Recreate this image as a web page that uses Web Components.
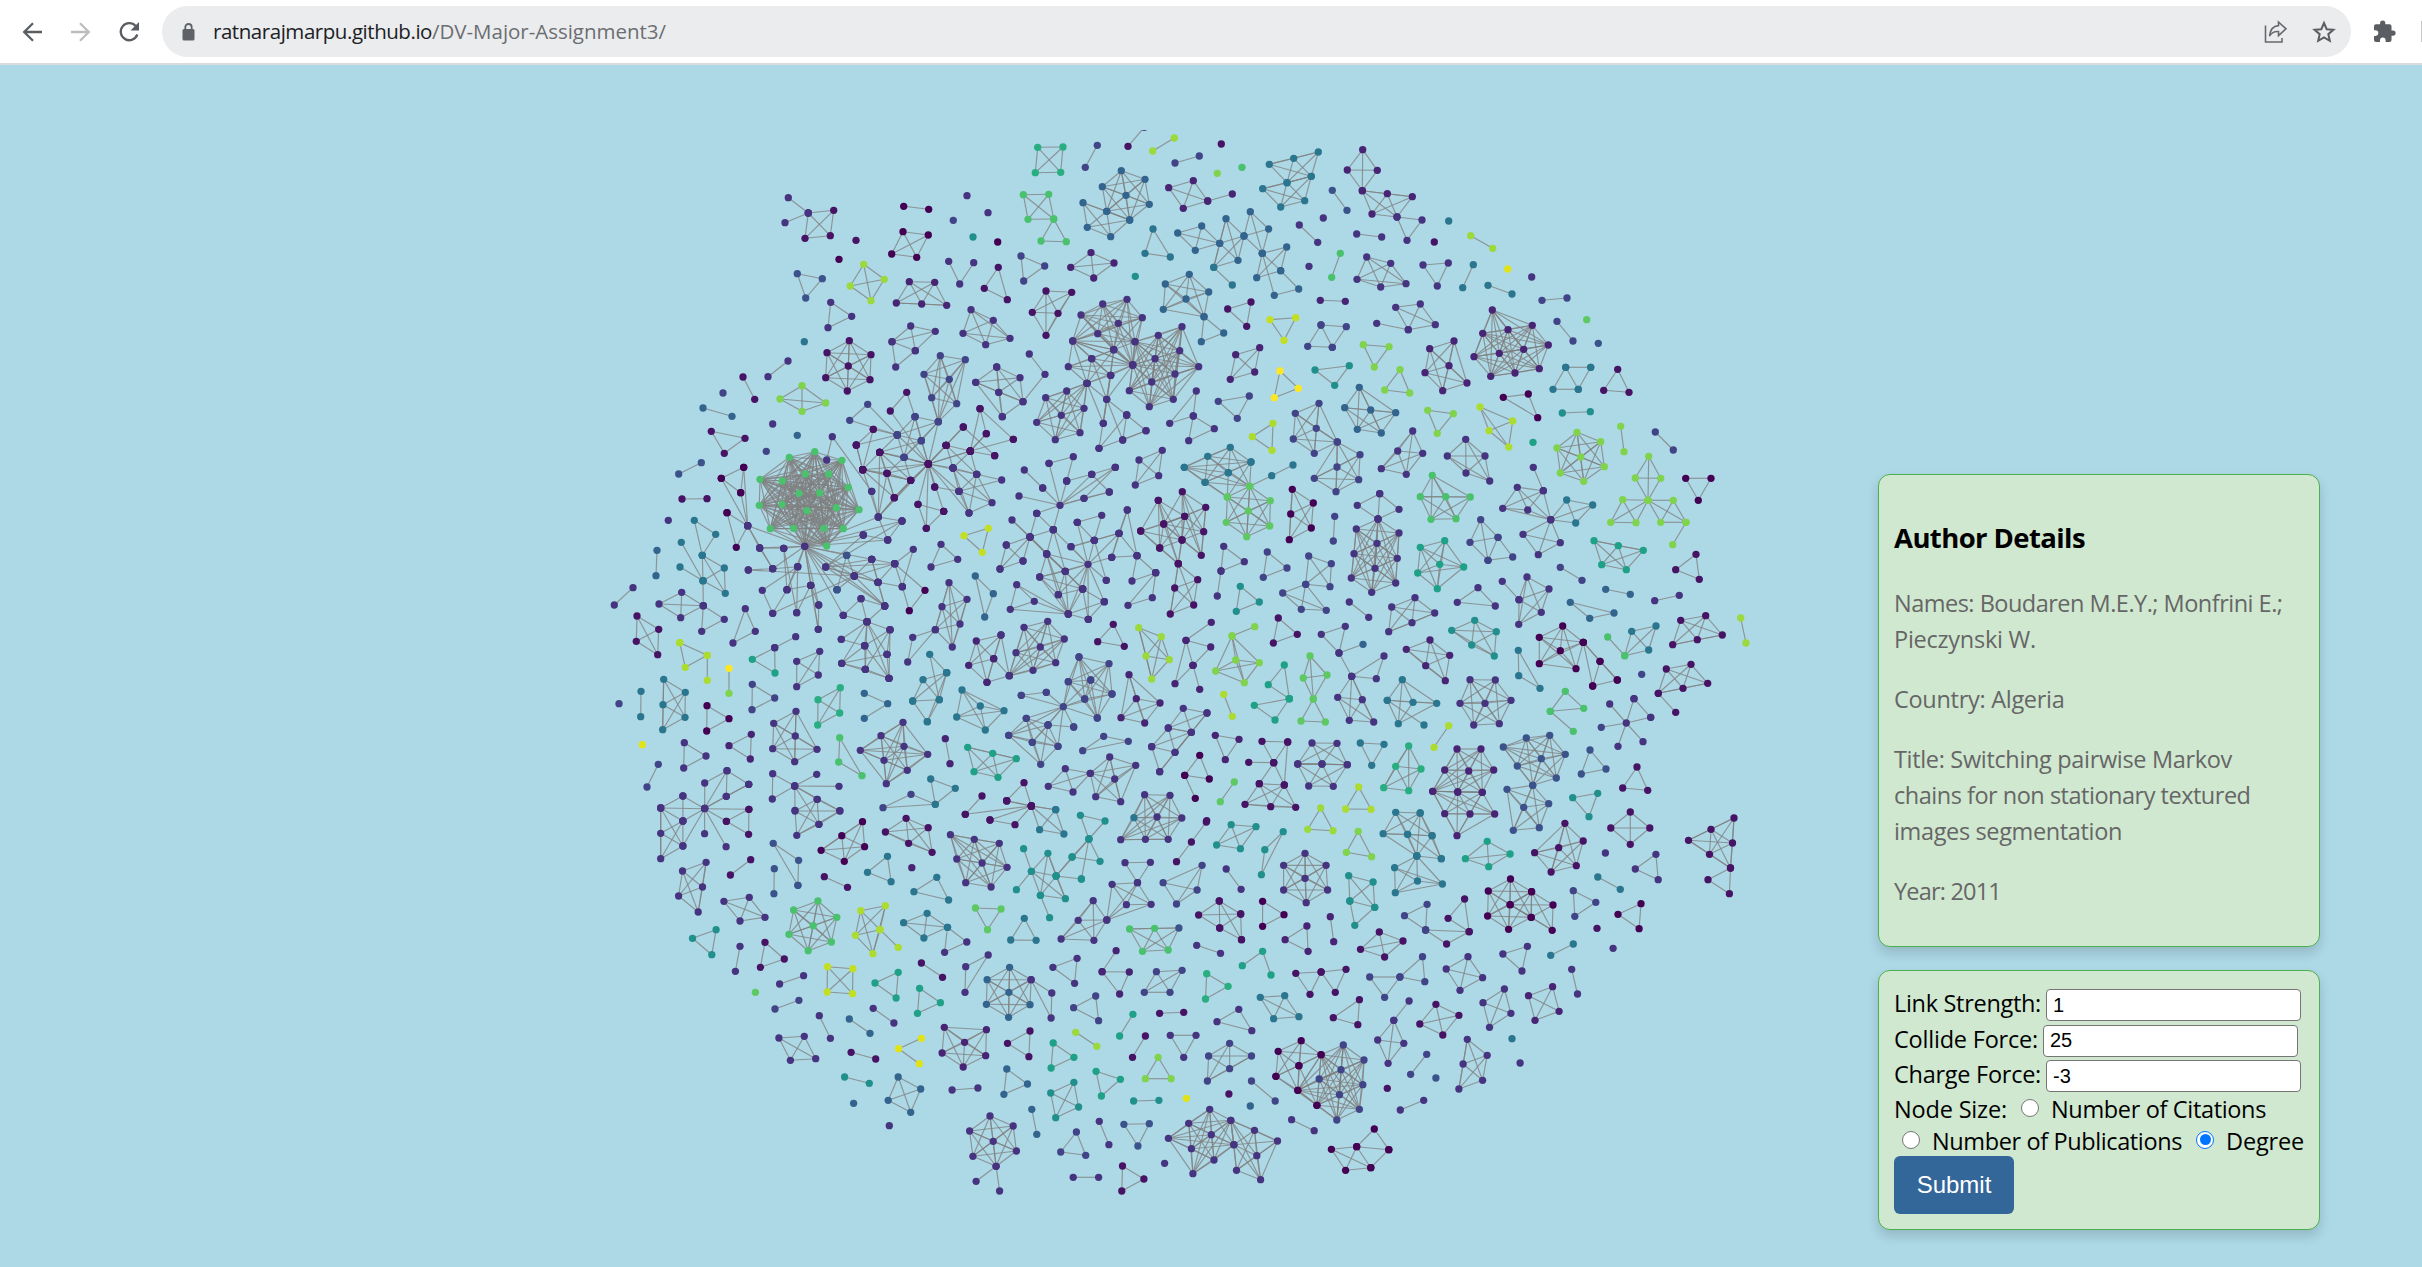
<!DOCTYPE html>
<html lang="en">
<head>
<meta charset="utf-8">
<title>Author Network</title>
<style>
html,body{margin:0;height:100%;overflow:hidden}
body{background:#add8e6;font-family:"Open Sans","Noto Sans",sans-serif;color:#000}
</style>
</head>
<body>
<network-page></network-page>
<script>
const attach = (el, html) => { const r = el.attachShadow({mode:'open'}); r.innerHTML = html; return r; };

/* A line of text whose tracking is tuned to a given width */
class FitText extends HTMLElement {
  connectedCallback(){
    attach(this, `<style>:host{display:block;white-space:nowrap}span{display:inline-block}</style><span><slot></slot></span>`);
    const w = +this.getAttribute('w'), s = this.shadowRoot.querySelector('span');
    const n = this.textContent.length, nat = s.getBoundingClientRect().width;
    if (w && nat) s.style.letterSpacing = ((w - nat) / n) + 'px';
  }
}
customElements.define('fit-text', FitText);

class BrowserBar extends HTMLElement {
  connectedCallback(){
    attach(this, `<style>
:host{display:flex;box-sizing:border-box;height:65px;background:#fff;border-bottom:2px solid #d9dcde;padding:6px 0 6px 22px;align-items:center;overflow:hidden;flex:none}
svg{display:block;flex:none}
.nav{display:flex;gap:26px;width:140px;flex:none}
.omni{display:flex;align-items:center;box-sizing:border-box;width:2189px;height:51px;border-radius:26px;background:#ebecee;padding:0 15px 0 20px;flex:none}
.url{display:flex;font-size:20.5px;line-height:51px;margin-left:18px;color:#202124;flex:1}
.path{color:#6b6e72}
.acts{display:flex;gap:24px}
.puz{margin-left:22px}
.sep{width:2px;height:21px;background:#c8c8c8;margin-left:25px;flex:none}
</style>
<div class="nav">
<svg width="22" height="22" viewBox="0 0 22 22" fill="none" stroke="#5a5d61" stroke-width="2.3"><path d="M20 11H2.6M11 2.2L2.2 11l8.8 8.8"/></svg>
<svg width="22" height="22" viewBox="0 0 22 22" fill="none" stroke="#bcbdbf" stroke-width="2.3"><path d="M1 11h17.6M10 2.2l8.800 8.800-8.800 8.800"/></svg>
<svg width="22" height="22" viewBox="0 0 22 22" fill="none" stroke="#5a5d61" stroke-width="2.300"><path d="M17.600 5A8.500 8.500 0 1 0 19.300 13.500"/><path d="M21 1v8.500h-8.500z" fill="#5a5d61" stroke="none"/></svg>
</div>
<div class="omni">
<svg width="13" height="18" viewBox="0 0 13 18"><rect x=".5" y="6" width="12" height="11.500" rx="1.500" fill="#5f6368"/><path d="M3.300 7V4.200a3.200 3.200 0 0 1 6.400 0V7" fill="none" stroke="#5f6368" stroke-width="1.800"/></svg>
<div class="url"><fit-text w="219">ratnarajmarpu.github.io</fit-text><fit-text class="path" w="234">/DV-Major-Assignment3/</fit-text></div>
<div class="acts">
<svg width="24" height="24" viewBox="0 0 24 24" fill="none" stroke="#66696d" stroke-width="1.600"><path d="M1.500 5.500V22h16.500v-4"/><path d="M14.500 2l7.500 6.800-7.500 6.800v-4C10.500 11.300 7.500 12.800 5.500 16c.6-6 3.800-10 9-10.400z"/></svg>
<svg width="24" height="24" viewBox="0 0 24 24" fill="none" stroke="#5a5d61" stroke-width="2"><path d="M12 3l2.700 6.200 6.700.6-5.100 4.400 1.500 6.600L12 17.300l-5.800 3.500 1.500-6.600-5.100-4.400 6.700-.6z"/></svg>
</div></div>
<svg class="puz" width="23" height="23" viewBox="0 0 23 23"><path fill="#5a5d61" d="M20 10.500h-1.500V6.300a2 2 0 0 0-2-2h-4.200V3a2.600 2.600 0 0 0-5.200 0v1.300H3a2 2 0 0 0-2 2v4h1.500a2.800 2.800 0 0 1 0 5.600H1v4a2 2 0 0 0 2 2h4v-1.500a2.800 2.800 0 0 1 5.600 0v1.500h3.900a2 2 0 0 0 2-2v-4.200H20a2.600 2.600 0 0 0 0-5.200z"/></svg>
<div class="sep"></div>`);
  }
}
customElements.define('browser-bar', BrowserBar);

class PanelCard extends HTMLElement {
  connectedCallback(){
    attach(this, `<style>:host{display:block;box-sizing:border-box;width:442px;background:#d0e8d0;border:1px solid #4caf50;border-radius:12px;padding:15px;box-shadow:0 6px 12px rgba(0,0,0,.15)}</style><slot></slot>`);
  }
}
customElements.define('panel-card', PanelCard);

class AuthorDetails extends HTMLElement {
  connectedCallback(){
    attach(this, `<style>
:host{display:block}
panel-card{height:473px}
h3{font-size:27.500px;line-height:38px;margin:29px 0 27.500px}
p{font-size:23.500px;line-height:36px;color:#666;margin:0 0 24px}
</style><panel-card>
<h3><fit-text w="191">Author Details</fit-text></h3>
<p><fit-text w="388.5">Names: Boudaren M.E.Y.; Monfrini E.;</fit-text><fit-text w="142">Pieczynski W.</fit-text></p>
<p><fit-text w="170.5">Country: Algeria</fit-text></p>
<p><fit-text w="338">Title: Switching pairwise Markov</fit-text><fit-text w="356.5">chains for non stationary textured</fit-text><fit-text w="228">images segmentation</fit-text></p>
<p><fit-text w="107">Year: 2011</fit-text></p>
</panel-card>`);
  }
}
customElements.define('author-details', AuthorDetails);

class ForceForm extends HTMLElement {
  connectedCallback(){
    attach(this, `<style>
:host{display:block}
panel-card{height:260px;font-size:23.500px}
.row{display:flex;height:35.500px;line-height:35.500px;align-items:flex-start}
.lab{flex:none}
input[type=text]{box-sizing:border-box;width:255px;height:32px;margin:3px 0 0 5px;border:1px solid #767676;border-radius:4px;padding:0 6px;font:20px "Liberation Sans",Arial,sans-serif;color:#000;background:#fff;outline:0}
.r{box-sizing:border-box;width:18px;height:18px;border:1.500px solid #767676;border-radius:50%;background:#fff;margin:6px 0 0;flex:none}
.r.on{border:1.500px solid #0075ff;display:grid;place-items:center}
.r.on::after{content:"";width:11px;height:11px;border-radius:50%;background:#0075ff}
.row.s{height:32px;line-height:32px}
button{display:block;width:120px;height:58px;border:0;border-radius:6px;background:#369;color:#fff;font:24px "Liberation Sans",Arial,sans-serif;padding:0;margin:-1px 0 0}
</style><panel-card>
<div class="row"><fit-text class="lab" w="147">Link Strength:</fit-text><input type="text" value="1"></div>
<div class="row"><fit-text class="lab" w="144">Collide Force:</fit-text><input type="text" value="25"></div>
<div class="row"><fit-text class="lab" w="147">Charge Force:</fit-text><input type="text" value="-3"></div>
<div class="row s"><fit-text w="113">Node Size:</fit-text><span class="r" style="margin-left:14px"></span><fit-text w="215" style="margin-left:12px">Number of Citations</fit-text></div>
<div class="row s"><span class="r" style="margin-left:8px"></span><fit-text w="250" style="margin-left:12px">Number of Publications</fit-text><span class="r on" style="margin-left:14px"></span><fit-text w="78" style="margin-left:12px">Degree</fit-text></div>
<button>Submit</button>
</panel-card>`);
  }
}
customElements.define('force-form', ForceForm);

/* Viridis ramp, one letter per step */
const RAMP = {a:'#440154',b:'#471365',c:'#482475',d:'#463480',e:'#414487',f:'#3b528b',g:'#32648e',h:'#2a768e',i:'#21908c',j:'#1fa187',k:'#28ae80',l:'#4ac16d',m:'#5ec962',n:'#80d34d',o:'#9bd93c',p:'#addc30',q:'#c2df23',r:'#dfe318',s:'#fde725'};

/* Tiles of the graph: origin, scale, then one group per line.
   A plain line is a fully linked group; a leading "-" is a path; "*" is a hub and its spokes. */
const TILES = [
[600,120,3,3,`
-d 565,233 625,279
-d 555,308 625,279
d 625,279 b 701,271 691,347 615,355
a 911,259 986,268
a 909,335 985,345 950,412 875,402
d 1101,227
d 1164,278
e 1060,301
i 1119,351
a 1193,366
b 768,361
a 717,418
f 592,461 667,476 617,534
o 791,433 853,478 813,542 751,498
-d 1046,424 1079,492 1121,428
c 928,485 1004,487 1040,556 965,552 889,549
b 1195,442 1153,505 1222,539
d 692,547 755,589 684,623
d 1113,569 1180,601 1230,655 1157,674 1089,640
h 613,665
d 932,618 1006,634 946,692 876,665
-d 946,692 887,741 876,665
b 748,662 813,704 810,779 742,813 677,773 681,698 745,738
d 564,723 504,770
b 429,771 464,838
e 369,819
g 309,864 396,889
n 606,797 677,849 606,874 540,837
d 518,912
b 334,934 435,955 373,1000
g 592,946
e 499,994
e 1021,707 1096,719 1048,778 972,763 1070,851 995,833 1015,905
-b 985,1032 871,873 920,817 e 945,890
e 803,853 749,901 892,945
-b 788,1049 769,975 820,928 e 892,945 b 769,975
-b 820,928 788,1049
e 945,890 1015,905 892,945 964,962 912,1012
*b 985,1032 e 892,945 964,962 1015,905 945,890 912,1012 b 1038,976 839,997 1111,993 1090,921
-b 839,997 e 892,945
-b 839,997 e 964,962
d 1190,741 1127,787 1196,817 1260,773 1269,845
-d 1127,787 1207,890 1196,817
-d 1190,741 1207,890 1269,845 1335,763 1288,702
-b 1240,958 1140,866 1159,941 1111,993 1140,866
-b 1111,993 1240,958
-b 1038,976 1090,921 1184,1007
-b 1038,976 1111,993 1159,941
-d 680,1020 697,950 815,1114
`],
[600,440,3,3,`
f 304,68 236,102
b 246,177 321,176
d 205,241
a 431,82 364,115 422,158
*d 443,257 a 431,82 364,115 422,158
-a 381,218 409,322 d 443,257 a 381,218
d 614,319 l 644,35 568,52 726,61 480,118 547,123 616,102 686,102 745,142 597,160 659,159 478,196 546,193 709,203 777,209 621,212 511,266 580,265 671,265 730,266 680,318
*d 614,319 443,257 479,324 551,325 593,380 677,381 632,436 518,386 f 740,346 d 763,408 815,358 834,427 854,498 f 711,449 d 730,526 656,495 655,568 790,285 863,300 835,231 906,243 561,449
-d 443,257 479,324 518,386 443,257
-d 445,390 518,386 593,380 487,451 518,520 561,449 551,325 479,324
-d 445,390 763,408 518,520
-d 551,325 590,518 593,380 561,449 632,436 590,518
-d 632,436 655,568 656,495 632,436
*d 677,381 815,358 884,371 763,408 834,427 854,498 790,285 906,243
*d 763,408 f 740,346 711,449 d 884,371 854,498 834,427
-f 740,346 711,449
-d 763,408 815,358 884,371 834,427 815,358
-d 834,427 907,440 884,371 940,328 907,440
-d 884,371 a 975,451 928,512 d 907,440
-d 834,427 854,498 815,358
-d 790,285 863,300 906,243 835,231 863,300
b 788,89 839,37 932,121 883,173 985,72
*b 861,100 788,89 839,37 883,173 985,72 932,121
*d 835,231 b 788,89 861,100 932,121 883,173 985,72 839,37 d 815,154
-b 788,89 769,16
-b 839,37 e 912,52 b 932,121 788,89
-e 912,52 b 861,100
*b 985,72 d 1059,84 b 1111,34 d 1130,103 1077,154 b 1004,141 954,193 979,265 1039,16 1031,214
-b 1031,214 954,193 979,265 1031,214
d 1059,84 1130,103 1077,154 1107,219 1176,188
-d 1059,84 b 1039,16 d 1130,103 b 1111,34 1184,47
-d 1077,154 1205,120 1130,103
-b 1111,34 d 1059,84
-b 1004,141 d 1077,154
-d 1107,219 b 985,72
q 1165,265 1092,287 1147,337
d 1023,313 1073,358 993,381
g 1126,408 1180,461 1154,531
-h 307,346 283,241 347,283 307,346
-h 244,307 309,422 240,381
h 307,346 309,422 373,384 376,460
-h 309,422 d 310,497
g 171,331 168,407
d 99,443 43,495
d 245,457 177,492 242,533 310,497
d 310,497 373,538 305,574
b 111,528 176,568 173,644 109,604
d 436,506 466,574 399,609
-d 587,590 524,623 j 457,658 525,699 d 524,623
-p 239,608 322,646 256,682 239,608
p 322,646 322,721
s 387,685 n 387,760
d 590,664 659,634 655,705 590,740
e 457,733 524,774 456,809
h 123,754 122,830
e 57,791
h 191,718 256,757 255,832 188,869 189,794
a 321,797 387,836 320,873
k 721,743 654,779 719,819 653,855
-g 793,760 863,791 793,835
r 127,914
d 253,908 318,948 251,984
c 454,883 387,917 451,957
e 175,973 141,1041
d 588,814 521,850 586,888 518,926 651,928 584,965
l 719,893 716,966 786,1007
d 909,847 843,887 912,919 781,931 983,943 852,961 922,991 859,1031
c 1036,896 1050,971
h 1086,750 1141,798 1212,812 1156,870 1070,831
h 1040,698 969,719 938,783 1018,779
-h 1040,698 989,643 1018,779 982,845 938,783
-h 982,845 1040,698
d 1047,428 1101,478 1026,500 1080,552 1006,569 1057,621
d 1006,569 938,592 923,666
c 1129,603 1181,656 1161,727 1106,676 1203,585
-c 1181,656 1228,707 1161,727
-d 730,526 783,476 801,545 730,526
-d 783,476 854,498 801,545
-d 724,598 801,545 870,569 794,617 724,598
*d 801,545 794,617 861,643 796,688 867,715
-d 870,569 867,715 796,688 870,569 861,643 867,715 725,670 861,643
-d 796,688 725,670 794,617 867,715
-d 725,670 801,545
-d 794,617 796,688
-d 446,1033 381,992 314,1029 314,1105 379,1069 381,992 314,1105
-d 446,1033 379,1069
-d 446,1033 314,1105
d 518,1001 517,1077 584,1038
*d 584,1038 650,1003 717,1039 652,1078 585,1111 719,1112
e 933,1063 849,1103 h 1006,1093
h 992,1017 1066,1045 1006,1093
j 1103,922 1178,940 1122,995 1194,1012 1249,956
b 1146,1068 1096,1123
-b 1220,1082 1272,1028 1294,1098 h 1367,1109
-b 1096,1123 1294,1098
-b 1220,1082 1294,1098
`],
[1000,440,3,3,`
*d 180,196 128,144 57,168 200,123 275,103 252,175 147,70 110,220 160,269 346,82 328,156
-d 73,90 128,144
-d 147,70 220,50 200,123
-d 346,82 275,103 328,156 252,175 346,82
-d 200,123 275,103
-d 140,342 36,240 90,291 19,315 69,363 90,291 0,387 69,363
-d 0,387 19,315
-d 90,291 140,342 160,269 90,291
-d 110,220 160,269 196,394
-d 110,220 90,291 196,394
d 140,342 196,394 175,464 119,411 205,522 248,447
*d 264,373 140,342 196,394 283,301 213,320 335,352 319,421 248,447 265,538 205,522 119,411 357,280 232,247 175,464 313,485 160,269
-d 232,247 305,226 283,301 232,247
-d 319,421 283,301 213,320 357,280 283,301
-d 357,280 335,352 382,210 357,280 411,347 335,352
-d 382,210 411,347 396,423 467,398 411,347
-d 467,398 457,473 384,496 467,398
-d 248,447 313,485 265,538 205,522 313,485
-d 248,447 265,538
d 205,522 50,434 103,484 31,508
d 487,31 417,60 476,107 406,135
h 691,22 623,49 753,66 553,82 685,98 615,127 m 749,139
*m 682,171 h 615,127 553,82 753,66 685,98
-m 749,139 h 815,107 879,75
m 682,171 749,139 811,182 745,213 679,247 809,258 740,290
b 475,181 491,252 422,273 479,324 535,371 554,229
b 547,155 554,229 617,202 611,275 604,346 546,300 491,252
b 535,371 593,419 524,444 581,495 511,522
*b 546,300 535,371 422,273 479,324 475,181
a 877,148 940,189 872,222 934,264 868,299
e 1004,229 1000,303
e 1012,6 1080,44 1011,81 943,115 1076,119 1008,155
d 1139,161 1072,196 1134,237
-d 1139,161 1197,208 1134,237
d 1134,237 1069,267 1131,310 1197,279 1062,341 1192,355 1125,385 1054,414 1187,429 1115,457
d 671,319 733,365 663,393
d 663,393 652,468
e 802,336 861,384 790,412
i 721,439 778,486 709,514
e 926,348 994,371 990,440 917,433
e 917,433 904,508 979,511 848,459
d 1048,486 1106,532
b 835,534 892,583 820,609
d 1036,559 964,583 1017,639
-g 1089,613 d 1017,639 1055,709
d 1055,709 1152,648 1129,716
d 1055,709 1013,772 1087,779 1048,841 1121,846
d 1175,501 1166,575 1245,473 1304,519 1236,548
b 340,553 293,605 373,619
d 143,544 72,562 193,597 121,621 48,638 167,668 99,691 28,707
-d 3,585 28,707
o 416,563 484,590 438,648 508,659 455,717
-c 634,547 558,601 632,621 579,676 599,748
-c 579,676 525,731 558,601 579,676
-n 764,560 696,588
n 696,588 707,660 778,668 647,693 733,728
p 671,763 697,829
-j 868,776 853,675 805,734 868,776
j 868,776 763,796 825,840
m 930,648 910,714 981,705 940,777
m 940,777 903,843 976,846
e 237,651 327,671 205,725 272,720 254,777 336,762 292,834
*e 190,800 237,651 272,720 254,777 292,834 205,725 336,762 139,757 64,766 221,861 79,835 144,855 26,886 97,907 174,919
-e 64,766 139,757
-e 144,855 221,861
e 79,835 144,855 26,886 97,907 174,919 122,973
c 387,704 409,776 480,789 363,833 434,849
e 311,889 248,932 385,904
d 550,805 621,819 505,864 574,877
d 505,864 574,877 525,937 455,920
-d 455,920 479,995 525,937 621,819
-d 479,995 574,877
c 646,886 717,898 676,959
-b 746,967 821,968 786,904 863,906 821,968 778,1031
-b 863,906 853,1035 821,968
b 778,1031 853,1035 735,1093 812,1100 887,1102
d 936,909 1011,910 1042,974 893,972 966,972
d 893,972 966,972 1042,974 926,1038 1000,1039
h 1081,909 1152,913 1115,976
k 1226,918 1187,979 1151,1043 1263,987 1226,1052
d 196,986 145,1039 219,1056 271,1000
d 271,1000 329,951 407,976 344,1017 287,1070 362,1085
-a 554,1006 599,946 628,1017 554,1006 586,1075
m 703,1026 661,1085
p 1076,1041 1037,1107 1113,1108
b 620,1142
`],
[1400,460,3,3,`
l 97,46 61,110 137,110 211,111 93,178 168,176
-d 400,22 430,92
d 352,82 430,92 308,145 383,150 452,179
d 452,179 h 500,120 578,135 527,189
d 452,179 481,248 369,223 415,284
e 242,179 294,232 210,247 264,301
-e 294,232 338,291 264,301
j 134,242 61,262 119,313 191,321 53,339 112,386
e 481,322 546,361
g 617,388 691,403
d 764,422 838,406
n 746,-11 706,54 782,55 744,121
n 744,121 668,119 632,187 708,188
n 744,121 820,121 782,187 858,187
n 858,187 818,254
a 857,55 933,55 895,121
b 888,283 827,329 898,358
j 582,242 655,257 730,271 605,314 679,329
d 234,383 172,427 286,438
d 307,364 357,419
d 381,351 447,387 357,419 424,457 356,493
g 511,427 569,475 642,459
i 224,481 155,511 289,515 215,555 283,588
c 90,540 19,568 149,586 77,617 136,662
b 917,467 842,481 967,525 892,539 818,554
o 1022,474 1038,549
h 768,498 695,514 746,570 l 674,587
l 623,531 674,587
a 488,498 418,532 481,572 418,611 528,626 550,547
-a 600,604 550,547 578,678 652,660 600,604 578,678
-a 550,547 652,660
e 725,643
h 355,571 356,647 420,685
b 873,613 799,627 923,670 849,685 775,700
b 775,700 827,757
h 7,659 39,727 110,730 -38,721 -5,791
-h -38,721 72,795
d 210,659 286,660 333,721 255,730 180,730 221,795 298,791
l 496,694 451,754 551,745
l 451,754 520,814
*d 679,789 629,732 702,716 752,772 729,845 654,859 e 604,802
-d 702,716 752,772
p 146,797 102,862
c 171,867 243,867 134,930 206,933 281,930 98,994 173,996 247,997
c 98,994 173,996 247,997 134,1061 210,1062 284,1062 171,1127
f 449,826 379,834 310,861 496,883 424,896 352,918 469,954 398,976
f 398,976 321,988 446,1031 371,1042 340,1111 418,1103
f 570,870 544,942 618,927
b 711,921 668,984 743,991
i 593,1000 518,1013 567,1070
`],
[1000,120,3,3,`
k 113,82 189,81 182,157 106,158
e 292,76 256,142
b 384,79 e 433,22
o 458,93 523,54
b 664,72
e 525,129 598,108
l 726,142
n 652,160
l 70,224 146,223 161,297 84,298
l 161,297 123,363 199,365
g 364,152 435,178 307,200 378,226 448,253 389,300 320,274
g 320,274 389,300 249,248 262,322 332,350
c 506,203 580,182 623,243 550,265
c 623,243 697,222
h 955,96 881,115 808,133 934,169 861,188
h 861,188 934,169 788,206 914,242 842,261
c 1088,89 1042,150 1132,151 1087,212
c 1087,212 1162,221 1116,282 1191,291 1237,230
f 997,211 1041,271
d 970,294
d 898,315 953,367
d 1070,342 1145,351
d 1191,291 1266,300 1221,361
h 459,327 435,400 511,411
g 533,339 605,318 659,370 586,391
g 678,296 659,370 732,348 714,421 h 641,442
h 641,442 697,495
g 751,275 732,348 806,327 787,400
g 787,400 860,381 842,452 770,473
-g 787,400 823,526 896,507 842,452
e 63,408 134,438 71,483
c 273,398 212,442 342,429 281,474
i 406,469
l 1021,400 995,472
d 927,439
d 1100,411 1172,430 1071,478 1142,501 1218,491
b 138,513 215,517 174,580 97,577 138,646
g 568,463 496,492 626,516 558,537 490,568 612,590
g 612,590 671,639 604,665
b 753,546 683,567 740,619
c 961,541 1036,544
q 810,599 887,593 852,661
d 381,538 308,552 243,585 427,593 355,610 293,641 218,663 405,665 341,689 398,735
d 546,620 475,646 539,692 465,716 596,740 525,762 455,786 388,812 520,838 448,860 398,735 405,665
d 275,716 205,740 341,689 332,766 261,790 398,735 218,663
d 261,790 200,813 137,833 252,865 184,886 110,907 240,938 166,959
*d 320,838 261,790 398,735 310,910 341,689 332,766 380,885 368,960 275,716
-d 261,790 310,910 332,766
-d 438,932 380,885 297,985 438,932 368,960 380,885
-d 297,985 320,838
d 589,813 509,910 580,888
d 580,888 566,962 643,926
c 779,683 707,704 764,756 691,778
-e 997,682 963,615 1039,620 997,682 923,679 963,615
d 1187,562 1261,552 1306,614 1225,629
d 1130,610 1225,629
n 1090,674 1167,680 1123,741
i 1048,737 945,750 1004,796
s 840,753 895,805 823,833
e 748,828 655,844 712,895
n 1200,749 1229,819 1154,810
g 1078,802 1034,863 1112,870 1187,878 1072,928 1144,939
e 957,850 886,880 949,925 880,957 943,1000 1012,966
p 819,910 757,950 816,991
`],
[1400,120,3,3,`
d 38,933 68,1000 19,1063 -7,993 -56,1046
h 146,303
o 212,347 278,385
r 323,447
b 103,366
d 395,471
d 69,435 145,429 112,498
h 220,434 188,503
h 264,496 336,522
e 426,541 501,534
e 471,604 519,663
m 560,599
f 595,670
c 277,570 397,616 324,629 248,640 371,688 298,700 445,675 222,710 418,746 345,759 272,769
c 162,663 89,686 147,737 75,758 201,789 128,812
-h 572,742 497,742 459,808 535,808 572,742
-h 497,742 535,808
b 653,748 611,811 687,817
a 385,822 310,832 413,893
p 240,861 338,903 267,932 326,981
i 487,879 571,875
j 399,967
n 83,871 160,881 112,940
n 531,937 602,965 471,984 542,1011 613,1040 481,1059 551,1084
n 662,919 672,995
e 766,936 820,990
d 197,958 142,1008 255,1008 198,1059 269,1083
`],
[620,800,2.8,3,`
*d 237,26 176,63 237,101 297,140 b 298,64 361,28 d 114,24 176,138 176,-12
d 114,24 176,63 114,100 176,138 114,176
-d 114,24 176,-12 176,63
b 298,64 361,28 360,103
d 552,-2 490,33 616,33 557,73 495,106
-d 489,-42 557,73
a 679,65 621,107 563,151 685,140 628,184
b 801,55 743,96 863,83 808,130 874,157
-b 1036,60 1106,74 1152,18 1036,60
-b 1083,3 1152,18
b 1152,18 h 1220,29 1175,89 1243,102
-f 498,256 429,130 500,181 498,256
f 432,206 431,281
b 366,179 309,225
d 241,187 175,213 231,261 164,288 219,336
h 749,169 693,217 759,245
c 817,203
b 572,230 637,262
h 887,232 823,275 920,300
d 925,104 992,118 1062,130 943,177 1014,189 1084,202 968,248 1039,261
-i 1130,146 1152,214 1110,269
i 1198,160 1152,214 1221,228 1177,286 1247,296
i 1177,286 1203,353
-i 1292,237 1221,228 1266,171 1313,117 1221,228
-i 1292,237 1313,117 1344,184 1266,171
i 1289,46 1358,63 1313,117
d 362,292 291,304 406,352 336,363
l 554,303 486,330 607,352 541,377 473,403 592,426 527,452
p 743,317 674,332 728,389 659,406 708,461
p 728,389 779,442
h 860,340 794,368 917,382 851,414
d 971,426 909,457 h 917,382
m 995,324 1067,327 1029,389
h 1132,355 1094,420 1165,421
i 269,389 203,415 257,464
b 406,427 460,477 393,502
d 336,439 323,514
d 514,527 447,552
m 379,577
e 501,601 434,627
q 581,500 652,506 651,581 580,576
j 779,517 714,549 773,594
j 839,565 897,608 833,640
b 844,489 903,532
d 1031,465 968,500 966,577
c 1151,539 g 1091,502 1028,539 1089,577 1026,613 1148,614 1088,652
d 1151,539 1209,579 1207,654
d 1280,475 1212,502 1273,550
-c 1389,452 1350,515 1426,516 1399,582 1350,515
e 1332,588 1270,623 1340,662
j 1436,643 1399,708
d 558,647 589,715
g 642,657 700,700
d 709,625 767,669
d 445,714 516,709 477,781 548,776
-r 844,715 780,746 838,791
b 647,757 716,777
c 908,682 1026,689 965,727 902,759 1024,767 961,801
b 1148,693 1085,730 1145,770
o 1276,697 1335,739
j 1213,729 1271,772 1207,804
b 1471,708 1435,772
n 1507,772 1471,836 1543,836
i 629,831 698,850
g 779,831 842,867 751,901 814,937
g 654,910
d 754,977
d 930,870 1002,864
g 1083,807 1141,852 1075,883
i 1271,847 1206,879 1284,921 1220,953
j 1333,814 1401,838 1348,888
i 1438,903 1509,901
g 1153,928 1167,1003
d 1342,964 1369,1034
f 1411,973 1482,971 1450,1038
e 1278,996 1234,1056 1304,1066
d 1036,948 979,993 1101,978 1045,1024 1110,1053 988,1069 1053,1099
-d 997,1144 1053,1099 1063,1173
d 1269,1132 1340,1132
b 1407,1098 1467,1137 1405,1173
d 1525,1090
d 1414,188 1485,187 1449,248
d 1449,248 1378,253 1418,314 1487,313 1363,360
d 1325,302 1283,361 1363,360 1235,417 1327,421
l 1427,387 1497,385 1463,454 1535,450 f 1565,384
e 1502,515 1468,577 1540,577 1574,511
d 1469,-16 1540,-14 1504,51 1573,54 1402,119 1471,118 1535,118 h 1439,53
`],
[1160,800,2.6133,3,`
-b 121,66 82,126 43,185
i 186,74 251,80 148,135 210,146
i 322,95 274,149 265,224
o 420,24 386,88 452,92
n 518,94 487,157 553,170
e 110,196 8,248 97,270 43,312
d 173,207 212,268
d 379,160 323,196 434,196 379,235 323,270 438,270 382,308
h 616,37 680,39 583,101 647,103 711,107 671,168
-h 680,39 735,176 671,168
-h 711,107 735,176 647,103
h 671,168 613,203 673,243 738,252 615,278
i 493,227 557,246 496,303 561,322
-i 496,303 509,376 561,322
b 155,303 101,345 211,342 156,384
-b 211,342 213,419 156,384
-b 155,303 213,419
a 268,304 324,344 268,379
c 384,378 327,419 387,454
c 445,350 454,425
b 573,396 524,448 635,423 587,471
e 698,313 639,347 694,390
-e 694,390 b 808,395 749,432 e 694,390
b 796,297 753,355 808,395
a 916,237 858,273 915,314 856,348 970,352 911,388 971,275
a 971,275 915,314 1027,315 970,352 1025,391
b 1058,70 1106,123 1042,143 979,158 1088,197 1022,216
j 855,124 915,162 798,176 859,200
b 1229,36 1178,84 1280,84 1229,133
d 1164,159
d 1296,163 1242,207 1302,239
h 1144,231 1203,268
e 1080,272 1139,307 1084,349
a 1257,311 1197,343 1252,386
b 1142,385
d 1184,445
b 1500,54 1440,88 1381,121 1496,129 1436,163 1491,204
b 1491,204 1432,239 1488,281
h 1080,432 1021,466
d 960,439 896,462 946,513
d 1076,508 1091,582
d 805,470 748,507 843,533 784,571
e 686,470 627,531 692,545
e 548,531 627,531 587,592
b 355,520 421,516 392,583
b 421,516 486,508 458,577
-j 215,497 268,454 290,525
k 122,521 178,559 119,597
d 96,436 158,460
h 326,587 262,592 363,650 297,656
b 521,599 453,653 517,674
d 206,628 149,665 240,692
b -1,640 62,637
d 27,706 94,706 62,772
e 182,730 127,768 239,768 182,806 124,843
e 239,843 301,903
b 180,882
g 236,918
r 69,895
a 369,722 309,754 421,764 363,797 303,829 360,871
a 421,764 360,871 410,916 e 479,735 533,780 473,809 416,837 530,854 469,884 521,928 462,960
-a 303,829 410,916 363,797
d 651,603 611,661
d 611,661 569,720 637,730 596,790
b 721,613 679,672 781,646 739,705
d 900,567 844,608 917,640 861,682
c 1026,560 963,587 1043,634 980,661
h 920,716
d 941,789
d 803,718 855,766 792,792 843,841 781,867
e 697,763 655,823
f 721,834
b 594,865
d 689,901 628,930
d 344,959 403,992
a 514,1040 448,1048 485,1111 551,1103
-a 551,1103 598,1049 560,987 514,1040 598,1049
d 130,928 75,970 185,961 22,1015 134,1004 82,1046 193,1034 141,1080 86,1121
d 185,961 247,991 193,1034 307,1023 253,1067 200,1111 263,1139
`]];

class ForceGraph extends HTMLElement {
  connectedCallback(){
    const links = [], dots = [], f = n => n.toFixed(1);
    for (const [ox, oy, sx, sy, data] of TILES) {
      for (const raw of data.trim().split('\n')) {
        const mode = raw[0] === '-' || raw[0] === '*' ? raw[0] : '';
        const pts = []; let col = 'd';
        for (const t of (mode ? raw.slice(1) : raw).trim().split(/\s+/)) {
          if (/^[a-s]$/.test(t)) { col = t; continue; }
          const [x, y] = t.split(',').map(Number);
          pts.push([ox + x / sx, oy + y / sy - 130, col]);
        }
        const link = (p, q) => links.push(`<path d="M${f(p[0])} ${f(p[1])}L${f(q[0])} ${f(q[1])}"/>`);
        if (mode === '-') for (let i = 1; i < pts.length; i++) link(pts[i-1], pts[i]);
        else for (let i = 0; i < (mode === '*' ? 1 : pts.length); i++)
          for (let j = i + 1; j < pts.length; j++) link(pts[i], pts[j]);
        for (const p of pts) dots.push(`<circle cx="${f(p[0])}" cy="${f(p[1])}" r="3.650" fill="${RAMP[p[2]]}"/>`);
      }
    }
    attach(this, `<style>:host{display:block}svg{display:block}</style>
<svg width="1878" height="1137" viewBox="0 0 1878 1137"><g stroke="#808080" stroke-opacity=".78" stroke-width="1.150" fill="none">${links.join('')}</g><g>${dots.join('')}</g></svg>`);
  }
}
customElements.define('force-graph', ForceGraph);

class NetworkPage extends HTMLElement {
  connectedCallback(){
    attach(this, `<style>
:host{display:flex;flex-direction:column;width:100%;height:100vh;overflow:hidden}
main{display:flex;align-items:flex-start;flex:1;min-height:0}
force-graph{margin-top:65px;flex:none;width:1878px}
aside{display:flex;flex-direction:column;gap:23px;margin-top:409px;flex:none}
</style><browser-bar></browser-bar><main><force-graph></force-graph><aside><author-details></author-details><force-form></force-form></aside></main>`);
  }
}
customElements.define('network-page', NetworkPage);
</script>
</body>
</html>
